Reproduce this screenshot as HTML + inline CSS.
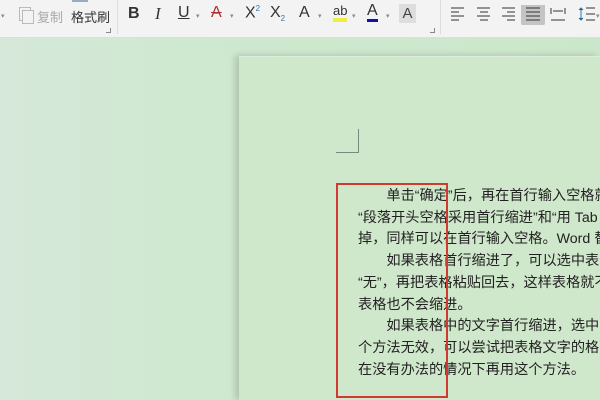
<!DOCTYPE html>
<html><head><meta charset="utf-8">
<style>
html,body{margin:0;width:600px;height:400px;overflow:hidden;}
body{position:relative;font-family:"Liberation Sans","Noto Sans CJK SC",sans-serif;background:linear-gradient(90deg,#d6e8da 0%,#cfe8d0 30%,#cbe7cb 100%);}
#tb{position:absolute;left:0;top:0;width:600px;height:37px;background:#f3f3f3;border-bottom:1px solid #ddd;}
.t{position:absolute;font-size:14px;color:#333;top:6px;}
.sep{position:absolute;top:0;width:1px;height:34px;background:#ddd;}
.dd{position:absolute;top:12px;font-size:7px;color:#888;}
#page{position:absolute;left:239px;top:56px;width:361px;height:344px;background:#cfe7ca;box-shadow:-4px -1px 6px rgba(0,0,0,0.15);border-top:1px solid #ddeedd;}
#txt{position:absolute;left:358px;top:186px;font-size:14.2px;line-height:21.7px;color:#222;white-space:nowrap;font-family:"Liberation Sans","Noto Sans CJK SC",sans-serif;}
#red{position:absolute;left:336px;top:183px;width:108px;height:211px;border:2px solid #d03a30;}
</style></head><body>
<div id="tb">
<div class="dd" style="left:1px">▾</div>
<div style="position:absolute;left:19px;top:7px;width:10px;height:12px;border:1px solid #bbb;"></div>
<div style="position:absolute;left:22px;top:10px;width:10px;height:12px;border:1px solid #bbb;background:#f3f3f3"></div>
<div class="t" style="left:37px;color:#aaa;font-size:13px;top:7px">复制</div>
<div class="t" style="left:71px;font-size:13px;top:7px">格式刷</div>
<div style="position:absolute;left:72px;top:0;width:16px;height:2px;background:#9ab"></div>
<div style="position:absolute;left:106px;top:28px;width:4px;height:4px;border-right:1px solid #888;border-bottom:1px solid #888"></div>
<div class="sep" style="left:117px"></div>
<div class="t" style="left:128px;font-weight:bold;font-size:16px;top:5px">B</div>
<div class="t" style="left:155px;font-style:italic;font-size:17px;top:4px;font-family:'Liberation Serif',serif">I</div>
<div class="t" style="left:178px;font-size:16px;top:4px;text-decoration:underline">U</div><div class="dd" style="left:196px">▾</div>
<div class="t" style="left:211px;font-size:16px;top:4px;color:#a33;text-decoration:line-through">A</div><div class="dd" style="left:230px">▾</div>
<div class="t" style="left:245px;font-size:16px;top:4px">X<sup style="font-size:8px;color:#37a">2</sup></div>
<div class="t" style="left:270px;font-size:16px;top:4px">X<sub style="font-size:8px;color:#37a">2</sub></div>
<div class="t" style="left:299px;font-size:16px;top:4px">A</div><div class="dd" style="left:318px">▾</div>
<div class="t" style="left:333px;font-size:13px;top:4px;border-bottom:4px solid #ee4;line-height:14px">ab</div><div class="dd" style="left:352px">▾</div>
<div class="t" style="left:367px;font-size:16px;top:3px;border-bottom:3px solid #11a;line-height:16px">A</div><div class="dd" style="left:386px">▾</div>
<div style="position:absolute;left:399px;top:4px;width:17px;height:19px;background:#ddd;font-size:15px;text-align:center;color:#444;line-height:19px">A</div>
<div style="position:absolute;left:430px;top:28px;width:4px;height:4px;border-right:1px solid #888;border-bottom:1px solid #888"></div>
<div class="sep" style="left:440px"></div>
<svg style="position:absolute;left:450px;top:5px" width="150" height="20" stroke="#333" stroke-width="1">
<path d="M1 3h13M1 7h8M1 11h13M1 15h8"/>
<path d="M27 3h13M30 7h8M27 11h13M30 15h8"/>
<path d="M52 3h13M57 7h8M52 11h13M57 15h8"/>
<rect x="71" y="-3" width="24" height="24" rx="3" fill="#c4c4c4" stroke="none"/>
<path d="M76 3h14M76 7h14M76 11h14M76 15h14"/>
<path d="M101 3v6M115 3v6M103 6h10M101 15h14" />
<path d="M131 3v12M129 5l2-2 2 2M129 13l2 2 2-2" stroke="#37a"/>
<path d="M136 3h9M136 9h9M136 15h9"/>
</svg>
<div class="dd" style="left:596px">▾</div>
</div>
<div id="page"></div>
<div style="position:absolute;left:358px;top:129px;width:1px;height:23px;background:#7a8a7a"></div>
<div style="position:absolute;left:336px;top:152px;width:23px;height:1px;background:#7a8a7a"></div>
<div id="txt">
&emsp;&emsp;单击“确定”后，再在首行输入空格就<br>
“段落开头空格采用首行缩进”和“用 Tab<br>
掉，同样可以在首行输入空格。Word 替<br>
&emsp;&emsp;如果表格首行缩进了，可以选中表<br>
“无”，再把表格粘贴回去，这样表格就不<br>
表格也不会缩进。<br>
&emsp;&emsp;如果表格中的文字首行缩进，选中要<br>
个方法无效，可以尝试把表格文字的格式<br>
在没有办法的情况下再用这个方法。
</div>
<div id="red"></div>
</body></html>
